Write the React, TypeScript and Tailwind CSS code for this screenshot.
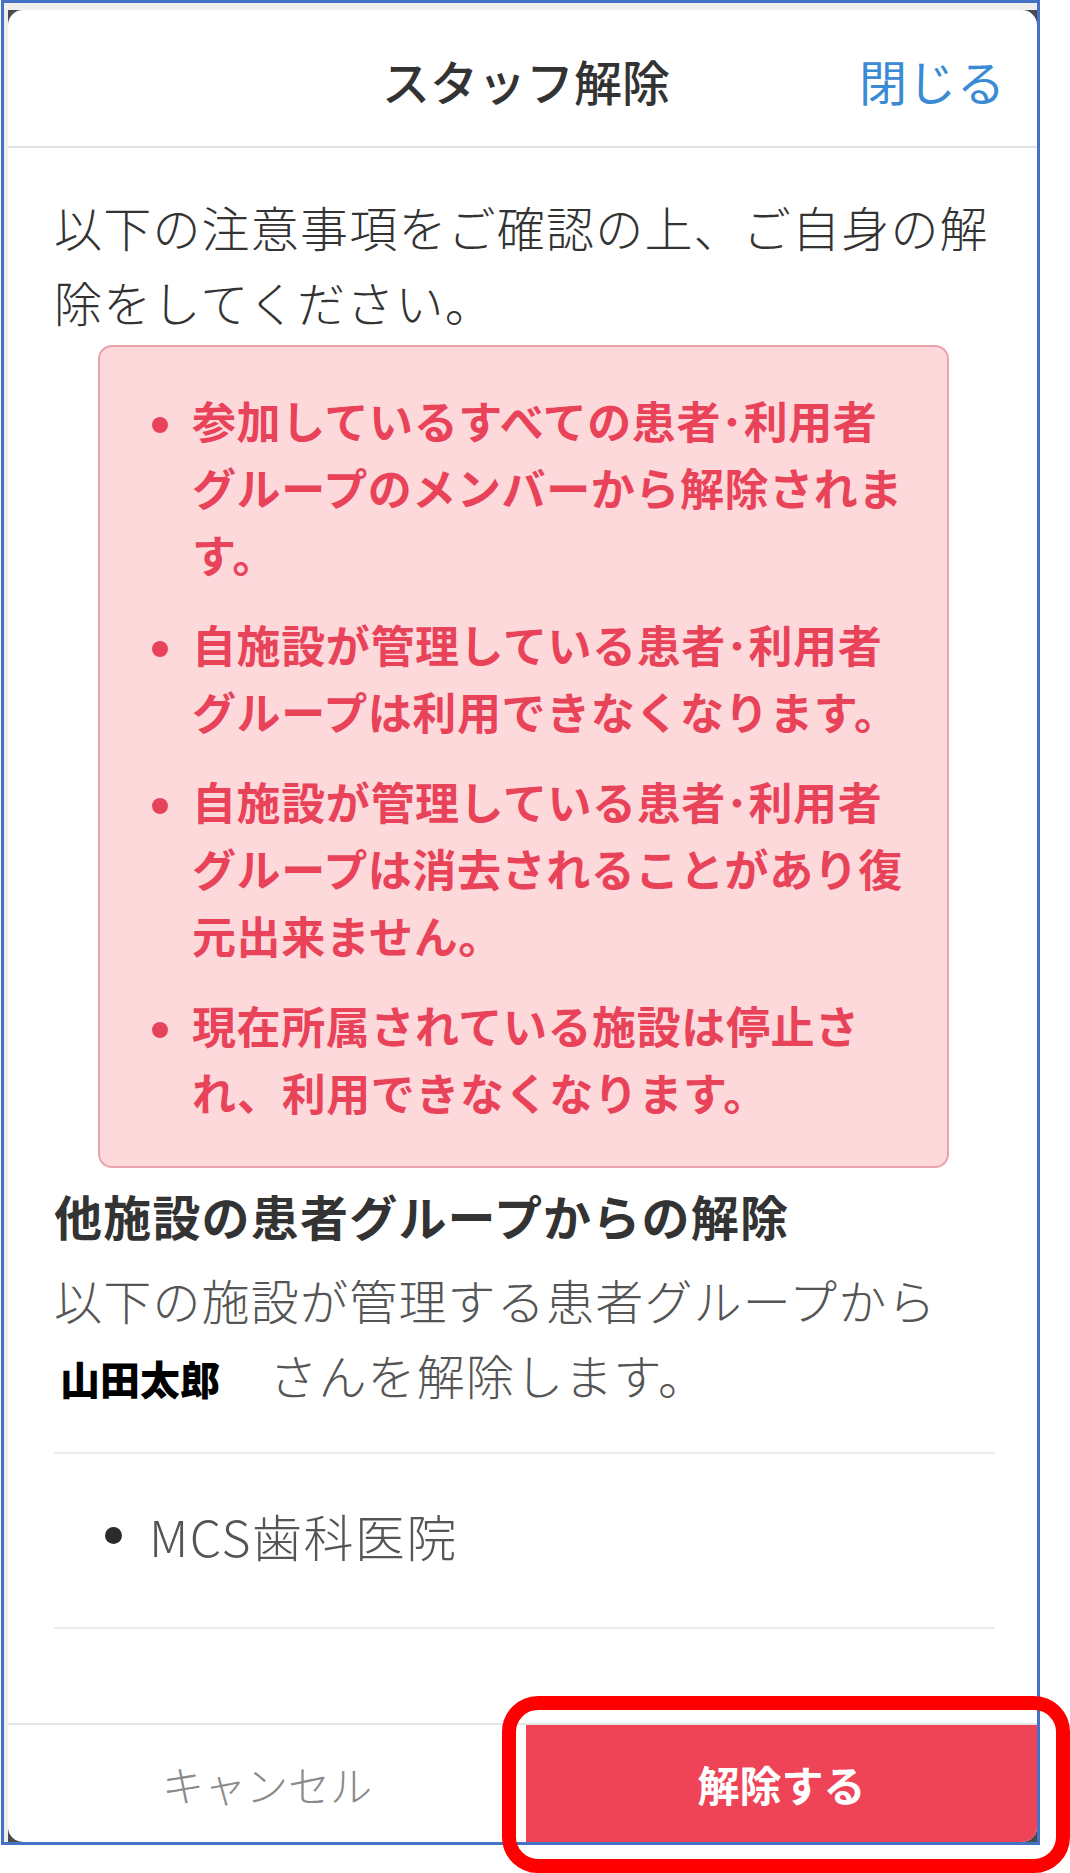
import React from "react";

const items: string[] = [
  "参加しているすべての患者･利用者グループのメンバーから解除されます。",
  "自施設が管理している患者･利用者グループは利用できなくなります。",
  "自施設が管理している患者･利用者グループは消去されることがあり復元出来ません。",
  "現在所属されている施設は停止され、利用できなくなります。",
];

export default function App() {
  return (
    <div className="relative w-[1070px] h-[1873px] bg-white overflow-hidden font-['Noto_Sans_CJK_JP','Noto_Sans',sans-serif]">
      <div className="ml-[1px] w-[1039px] h-[1845px] border-[3px] border-[#4472c4] bg-[#efefef] pt-[7px] pl-[4px] flex flex-col">
        <div className="flex-1 flex bg-[#4b4b4b]">
          <div className="w-full bg-white rounded-[15px] overflow-hidden flex flex-col">
            {/* Header */}
            <div className="h-[136px] shrink-0 grid grid-cols-[1fr_auto_1fr] items-center pl-[7px] pt-[4px]">
              <div />
              <div className="text-[48px] leading-none font-medium text-[#333333]">スタッフ解除</div>
              <div className="justify-self-end pr-[31px] text-[48px] tracking-[1px] leading-none text-[#3a8bd4]">閉じる</div>
            </div>
            <div className="h-[2px] shrink-0 bg-[#e4e4e4]" />

            {/* Body */}
            <div className="pl-[46px] pr-[42px] pt-[41px]">
              <p className="text-[48px] leading-[75px] tracking-[1.2px] font-light text-[#333333]">
                以下の注意事項をご確認の上、ご自身の解除をしてください。
              </p>

              <div className="mt-[6px] ml-[44px] w-[851px] border-2 border-[#eba3ab] bg-[#fdd9dc] rounded-[14px] pt-[40px] pb-[40px] pl-[52px] pr-[35px]">
                <ul className="flex flex-col gap-[23px]">
                  {items.map((t, i) => (
                    <li key={i} className="flex">
                      <span className="mt-[30px] w-[16px] h-[16px] shrink-0 rounded-full bg-[#e9435a]" />
                      <span className="ml-[24px] w-[720px] text-[44px] leading-[67px] tracking-[0.6px] font-bold text-[#e9435a]">
                        {t}
                      </span>
                    </li>
                  ))}
                </ul>
              </div>

              <h3 className="mt-[11px] text-[48px] leading-[72px] tracking-[1.2px] font-semibold text-[#333333]">
                他施設の患者グループからの解除
              </h3>
              <p className="mt-[11px] text-[48px] leading-[75px] tracking-[1.2px] font-light text-[#555555]">
                以下の施設が管理する患者グループから
                <span className="inline-block text-[40px] leading-none tracking-normal font-black text-black pl-[6px]">山田太郎</span>
                {"\u3000さんを解除します。"}
              </p>

              <div className="mt-[40px] h-[2px] bg-[#ececec]" />
              <ul className="pt-[44px] pb-[54px]">
                <li className="flex items-center h-[75px] pl-[51px]">
                  <span className="w-[17px] h-[17px] rounded-full bg-[#2b2b2b] shrink-0" />
                  <span className="ml-[27px] text-[50px] leading-[75px] tracking-[1.5px] font-light text-[#555555]">MCS歯科医院</span>
                </li>
              </ul>
              <div className="h-[2px] bg-[#ececec]" />
            </div>

            <div className="flex-1" />

            {/* Footer */}
            <div className="h-[2px] shrink-0 bg-[#e4e4e4]" />
            <div className="h-[117px] shrink-0 flex">
              <div className="flex-1 flex items-center justify-center text-[42px] font-light text-[#8a8a8a]">
                キャンセル
              </div>
              <div className="w-[511px] flex items-center justify-center bg-[#ef4457] text-[42px] font-bold text-white">
                解除する
              </div>
            </div>
          </div>
        </div>
      </div>

      {/* Red annotation highlight */}
      <div className="absolute left-[502px] top-[1696px] w-[568px] h-[177px] border-[14px] border-[#ff0000] rounded-[36px]" />
    </div>
  );
}
